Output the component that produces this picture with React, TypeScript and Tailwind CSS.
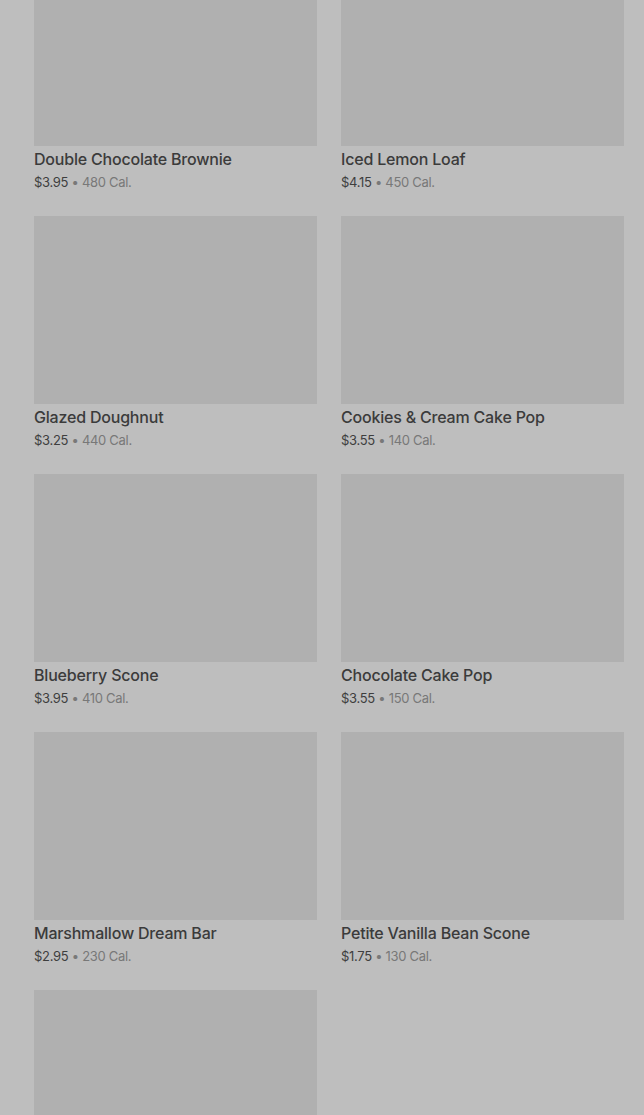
const ITEMS = [
  { name: 'Double Chocolate Brownie', price: '$3.95', cal: '480 Cal.' },
  { name: 'Iced Lemon Loaf', price: '$4.15', cal: '450 Cal.' },
  { name: 'Glazed Doughnut', price: '$3.25', cal: '440 Cal.' },
  { name: 'Cookies & Cream Cake Pop', price: '$3.55', cal: '140 Cal.' },
  { name: 'Blueberry Scone', price: '$3.95', cal: '410 Cal.' },
  { name: 'Chocolate Cake Pop', price: '$3.55', cal: '150 Cal.' },
  { name: 'Marshmallow Dream Bar', price: '$2.95', cal: '230 Cal.' },
  { name: 'Petite Vanilla Bean Scone', price: '$1.75', cal: '130 Cal.' },
];

export default function App() {
  return (
    <div
      className="h-[1115px] overflow-hidden bg-[#bebebe] pl-[34px] pr-[20px]"
      style={{ fontFamily: 'Inter, "Noto Sans", sans-serif' }}
    >
      <div className="-mt-[42px] grid grid-cols-2 gap-x-6 gap-y-6">
        {ITEMS.map((item) => (
          <div key={item.name} className="flex flex-col">
            <div className="h-[188px] bg-[#b0b0b0]" />
            <div className="mt-[1px] text-[16px] leading-6 font-medium tracking-[-0.2px] text-[#3b3b3b]">
              {item.name}
            </div>
            <div className="mt-[1px] text-[13px] leading-5 tracking-[-0.3px] text-[#3e3e3e]">
              {item.price}
              <span className="text-[#787878]"> • {item.cal}</span>
            </div>
          </div>
        ))}
        {/* last tile, cut off by the viewport */}
        <div className="h-[188px] bg-[#b0b0b0]" />
      </div>
    </div>
  );
}
